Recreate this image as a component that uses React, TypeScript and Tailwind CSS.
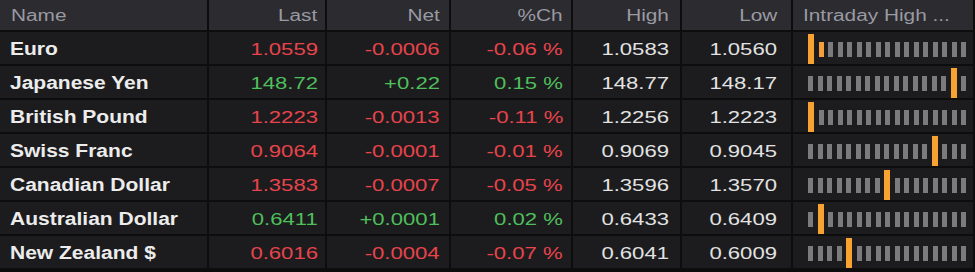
interface Quote {
  name: string;
  last: string;
  net: string;
  pct: string;
  high: string;
  low: string;
  up: boolean;
  marker: number;
  lit?: number;
}

const quotes: Quote[] = [
  { name: 'Euro', last: '1.0559', net: '-0.0006', pct: '-0.06 %', high: '1.0583', low: '1.0560', up: false, marker: 0, lit: 1 },
  { name: 'Japanese Yen', last: '148.72', net: '+0.22', pct: '0.15 %', high: '148.77', low: '148.17', up: true, marker: 15 },
  { name: 'British Pound', last: '1.2223', net: '-0.0013', pct: '-0.11 %', high: '1.2256', low: '1.2223', up: false, marker: 0 },
  { name: 'Swiss Franc', last: '0.9064', net: '-0.0001', pct: '-0.01 %', high: '0.9069', low: '0.9045', up: false, marker: 13 },
  { name: 'Canadian Dollar', last: '1.3583', net: '-0.0007', pct: '-0.05 %', high: '1.3596', low: '1.3570', up: false, marker: 8 },
  { name: 'Australian Dollar', last: '0.6411', net: '+0.0001', pct: '0.02 %', high: '0.6433', low: '0.6409', up: true, marker: 1 },
  { name: 'New Zealand $', last: '0.6016', net: '-0.0004', pct: '-0.07 %', high: '0.6041', low: '0.6009', up: false, marker: 4 },
];

const grid = 'grid grid-cols-[209px_118px_124px_122px_109px_111px_182px]';
const cell = 'flex items-center border-r-2 border-b-2 border-[#0d0d0e]';
const row = 'h-[34px] bg-[#1c1c1e] pt-[3px]';
const num = 'inline-block origin-right scale-x-[1.3] text-[17px]';

const changeColor = (up: boolean) => (up ? 'text-[#4fbf5c]' : 'text-[#e8444c]');

function RangeBar({ marker, lit }: { marker: number; lit?: number }) {
  return (
    <div className="flex items-start gap-[4.5px] h-full pl-[15px]">
      {Array.from({ length: 17 }).map((_, i) =>
        i === marker ? (
          <div key={i} className="w-[6px] h-[30px] mt-[2px] bg-[#f7a231]" />
        ) : (
          <div
            key={i}
            className={`w-[5px] h-[15px] mt-[10px] ${i === lit ? 'bg-[#f3a03a]' : 'bg-[#7b7b7d]'}`}
          />
        )
      )}
    </div>
  );
}

export default function App() {
  const head = 'h-[32px] bg-[#2b2b30] text-[#9a9aa2] pt-[2px]';
  return (
    <div className="w-[975px] h-[272px] bg-[#0d0d0e] font-['Liberation_Sans',Arial,sans-serif] overflow-hidden">
      <div className={grid}>
        <div className={`${cell} ${head} pl-[11px]`}>
          <span className="inline-block origin-left scale-x-[1.3] text-[16px]">Name</span>
        </div>
        <div className={`${cell} ${head} justify-end pr-[8px]`}>
          <span className="inline-block origin-right scale-x-[1.3] text-[16px]">Last</span>
        </div>
        <div className={`${cell} ${head} justify-end pr-[9px]`}>
          <span className="inline-block origin-right scale-x-[1.3] text-[16px]">Net</span>
        </div>
        <div className={`${cell} ${head} justify-end pr-[8px]`}>
          <span className="inline-block origin-right scale-x-[1.3] text-[16px]">%Ch</span>
        </div>
        <div className={`${cell} ${head} justify-end pr-[11px]`}>
          <span className="inline-block origin-right scale-x-[1.3] text-[16px]">High</span>
        </div>
        <div className={`${cell} ${head} justify-end pr-[14px]`}>
          <span className="inline-block origin-right scale-x-[1.3] text-[16px]">Low</span>
        </div>
        <div className={`${cell} ${head} border-r-0 pl-[10px]`}>
          <span className="inline-block origin-left scale-x-[1.3] text-[16px] whitespace-nowrap">
            Intraday High ...
          </span>
        </div>

        {quotes.map((q) => (
          <div key={q.name} className="contents">
            <div className={`${cell} ${row} pl-[10px]`}>
              <span className="inline-block origin-left scale-x-[1.2] text-[17.5px] font-bold text-[#ececec] whitespace-nowrap">
                {q.name}
              </span>
            </div>
            <div className={`${cell} ${row} justify-end pr-[7px] ${changeColor(q.up)}`}>
              <span className={num}>{q.last}</span>
            </div>
            <div className={`${cell} ${row} justify-end pr-[9px] ${changeColor(q.up)}`}>
              <span className={num}>{q.net}</span>
            </div>
            <div className={`${cell} ${row} justify-end pr-[8px] ${changeColor(q.up)}`}>
              <span className={num}>{q.pct}</span>
            </div>
            <div className={`${cell} ${row} justify-end pr-[11px] text-[#e2e2e2]`}>
              <span className={num}>{q.high}</span>
            </div>
            <div className={`${cell} ${row} justify-end pr-[14px] text-[#e2e2e2]`}>
              <span className={num}>{q.low}</span>
            </div>
            <div className={`${cell} h-[34px] bg-[#1c1c1e] border-r-0 items-stretch`}>
              <RangeBar marker={q.marker} lit={q.lit} />
            </div>
          </div>
        ))}
      </div>
    </div>
  );
}
